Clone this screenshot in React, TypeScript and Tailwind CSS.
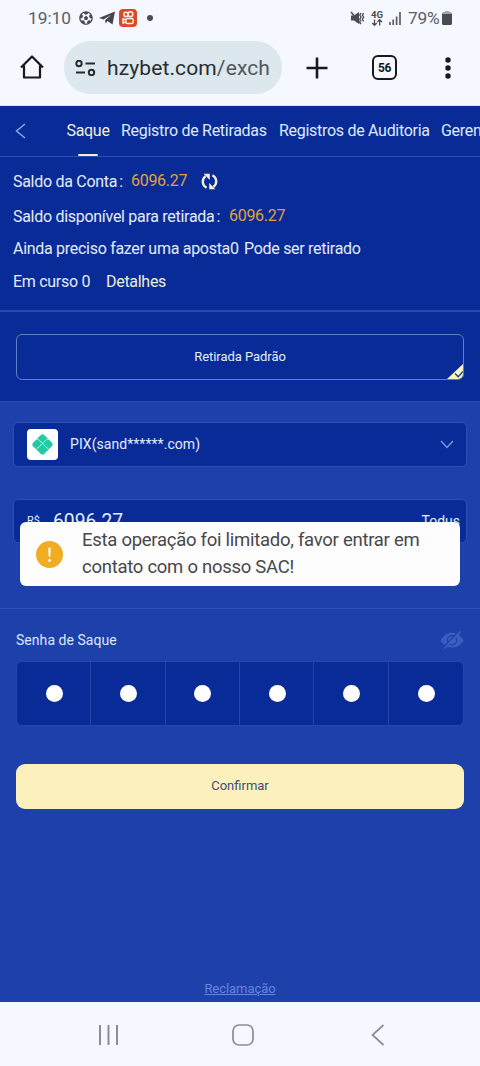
import React from "react";
import { FaFutbol } from "react-icons/fa";

function StatusBar() {
  return (
    <div className="flex h-9 shrink-0 items-center pr-[28px] pl-7 text-[#5b5e68]">
      <span className="w-[51px] text-[17.3px] leading-9 whitespace-nowrap">19:10</span>
      <FaFutbol className="h-[14px] w-[14px] text-[#4a4c52]" />
      <svg className="ml-[6px] h-[14px] w-[17px]" viewBox="0 0 17 14">
        <path d="M0 7 16 .5 13.500 13.500 8.500 10 6.800 12.500 6 9.200 12 4 4.500 8.400z" fill="#45474c" />
      </svg>
      <svg className="ml-[3px] h-[18px] w-[18px]" viewBox="0 0 18 18" fill="none" stroke="#fff0e8" strokeWidth="1.5">
        <rect width="18" height="18" rx="4" fill="#dd4926" stroke="none" />
        <circle cx="7" cy="5.4" r="2.1" />
        <circle cx="11.4" cy="5.2" r="2.4" />
        <rect x="6.8" y="9.4" width="7.4" height="5.2" rx="1.7" />
        <path d="M6.8 11 4 9.8v4.4l2.8-1.4" strokeLinejoin="round" />
      </svg>
      <span className="ml-[10px] h-[6px] w-[6px] rounded-full bg-[#4b4d55]" />
      <span className="flex-1" />
      <svg className="h-[14px] w-[15px]" viewBox="0 0 15 14" fill="none" stroke="#4b4d53" strokeWidth="1.4">
        <path d="M1 4.500h3L9 1v12L4 9.500H1z" fill="#4b4d53" stroke="none" />
        <path d="M1 1l10 12" strokeWidth="1.500" />
        <path d="M11 2l-1.200 2L11 6l-1.200 2.200L11 10.500M13.600 2l-1.200 2 1.200 2-1.200 2.200 1.200 2.300" />
      </svg>
      <svg className="ml-[6px] h-[17px] w-[12px]" viewBox="0 0 12 17" fill="none" stroke="#4b4d53" strokeWidth="1.300">
        <text x="0" y="7.500" fontSize="8.500" fontWeight="700" fill="#4b4d53" stroke="none" textLength="12" lengthAdjust="spacingAndGlyphs">4G</text>
        <path d="M3.500 9.500v5.500M1.200 13l2.300 2.300L5.800 13M8.700 15.500V10M6.400 12l2.300-2.300L11 12" />
      </svg>
      <svg className="ml-[6px] h-[13px] w-[12px]" viewBox="0 0 12 13" stroke="#5b5e68" strokeWidth="1.700">
        <path d="M1 10v3M4.200 7.500V13M7.600 4.500V13" />
        <path d="M11 0v13" />
      </svg>
      <span className="ml-[7px] w-[33px] text-[17.300px] leading-9 tracking-[-0.200px] whitespace-nowrap">79%</span>
      <svg className="ml-[1px] h-[14px] w-[10px]" viewBox="0 0 10 14">
        <path d="M3 0h4v1.500h1.500A1.500 1.500 0 0 1 10 3v9.500A1.500 1.500 0 0 1 8.500 14h-7A1.500 1.500 0 0 1 0 12.500V3a1.500 1.500 0 0 1 1.500-1.500H3z" fill="#494b50" />
        <path d="M3 0h4v1.500h1.500A1.500 1.500 0 0 1 10 3H0a1.500 1.500 0 0 1 1.500-1.500H3z" fill="#a3a6ad" />
      </svg>
    </div>
  );
}

function BrowserBar() {
  return (
    <div className="flex h-[70px] shrink-0 items-start border-b border-[#d9e2f8] pt-[5px] text-[#17191f]">
      <svg className="mt-[13px] ml-5 h-[26px] w-6 shrink-0" viewBox="0 0 24 26" fill="none" stroke="currentColor" strokeWidth="2.200" strokeLinejoin="round">
        <path d="M1 13.500 12 2.500 23 13.500M4 11.500v12h16v-12" />
      </svg>
      <div className="ml-5 flex h-[53px] w-[218px] shrink-0 items-center rounded-full bg-[#dce8ed] pl-[11px]">
        <svg className="h-4 w-[21px] shrink-0" viewBox="0 0 21 16" fill="none" stroke="#262b30" strokeWidth="2">
          <circle cx="4" cy="3.500" r="2.700" />
          <path d="M10.500 3.500H20M1 12.500h9" />
          <circle cx="16.500" cy="12.500" r="2.700" />
        </svg>
        <span className="ml-[11px] pt-[2px] text-[21px] leading-[53px] tracking-[0.120px] whitespace-nowrap text-[#272c31]">
          hzybet.com<span className="text-[#50575c]">/exch</span>
        </span>
      </div>
      <svg className="mt-4 ml-6 h-[22px] w-[22px] shrink-0" viewBox="0 0 22 22" stroke="currentColor" strokeWidth="2.600">
        <path d="M11 0.500v21M0.500 11h21" />
      </svg>
      <div className="mt-[14px] ml-[44px] flex h-[25px] w-[25px] shrink-0 items-center justify-center rounded-[6px] border-2 border-[#17191f] text-[12px] font-bold tracking-[-0.300px]">56</div>
      <svg className="mt-4 ml-[47px] h-[22px] w-[8px] shrink-0" viewBox="0 0 8 22" fill="currentColor">
        <circle cx="4" cy="3" r="2.700" />
        <circle cx="4" cy="11" r="2.700" />
        <circle cx="4" cy="19" r="2.700" />
      </svg>
    </div>
  );
}

function Tabs() {
  return (
    <nav className="flex h-[51px] shrink-0 overflow-hidden border-b border-[#2d4eae] text-[16px] leading-[50px] tracking-[-0.290px] whitespace-nowrap text-[#dfe9fa]">
      <svg className="mt-[17px] ml-[15px] h-4 w-[11px] shrink-0" viewBox="0 0 11 16" fill="none" stroke="#83a8ef" strokeWidth="1.500">
        <path d="M10 1 1.500 8l8.500 7" />
      </svg>
      <div className="ml-[40px] flex w-[44px] shrink-0 flex-col items-center text-[#f1efd8]">
        <span className="h-12">Saque</span>
        <span className="h-[2px] w-5 shrink-0 rounded-full bg-[#f0ecd0]" />
      </div>
      <span className="ml-[11px] w-[146px] shrink-0">Registro de Retiradas</span>
      <span className="ml-[12px] w-[151px] shrink-0">Registros de Auditoria</span>
      <span className="ml-[11px] shrink-0">Geren</span>
    </nav>
  );
}

function Balance() {
  return (
    <section className="h-[155px] shrink-0 border-b-2 border-[#2848aa] pt-[7px] pl-[13px] text-[16px] tracking-[-0.290px] whitespace-nowrap text-[#e3ecfb]">
      <div className="flex h-[35px] items-center">
        <span className="w-[118px]">Saldo da Conta<span className="ml-[2px]">:</span></span>
        <span className="w-[56px] pb-[2px] text-[#e3a03c]">6096.27</span>
        <svg className="ml-[14px] h-[17px] w-[17px]" viewBox="0 0 17 17" fill="none" stroke="#f5f0d8" strokeWidth="2.300">
          <path d="M5.600 14.700C1.200 12.500.2 6.500 4.600 3.200M11.400 2.300c4.400 2.200 5.400 8.200 1 11.500" />
          <path d="M2.600.8h6.200v6.200zM14.400 16.200H8.200V10z" fill="#f5f0d8" stroke="none" />
        </svg>
      </div>
      <div className="flex h-[35px] items-center">
        <span className="w-[216px]">Saldo disponível para retirada<span className="ml-[2px]">:</span></span>
        <span className="pb-[2px] text-[#e3a03c]">6096.27</span>
      </div>
      <div className="flex h-[29px] items-center">
        <span className="w-[231px]">Ainda preciso fazer uma aposta0</span>
        <span>Pode ser retirado</span>
      </div>
      <div className="flex h-[38px] items-center">
        <span className="w-[93px]">Em curso 0</span>
        <span className="text-[#efedd8]">Detalhes</span>
      </div>
    </section>
  );
}

function PixLogo() {
  return (
    <svg className="h-[21px] w-[21px]" viewBox="0 0 21 21">
      <path d="M8.600 1.300a2.700 2.700 0 0 1 3.800 0l7.300 7.300a2.700 2.700 0 0 1 0 3.800l-7.300 7.300a2.700 2.700 0 0 1-3.800 0l-7.300-7.300a2.700 2.700 0 0 1 0-3.800z" fill="#25c9a4" />
      <path d="M4.500 5.200c1.500 0 2 .3 3 1.300l6.500 6.500c1 1 1.500 1.300 2.500 1.300M16.500 5.200c-1.500 0-2 .3-3 1.300L7 13c-1 1-1.500 1.300-2.500 1.300" fill="none" stroke="#d5f7ee" strokeWidth="0.900" />
    </svg>
  );
}

function PasswordCells() {
  return (
    <div className="mx-4 mt-[11px] grid h-[65px] shrink-0 grid-cols-6 overflow-hidden rounded-[6px] border border-[#2546aa] bg-[#092b97]">
      {[0, 1, 2, 3, 4, 5].map((n) => (
        <div key={n} className="flex items-center justify-center border-r border-[#2444a8] pl-px last:border-r-0">
          <span className="h-[17px] w-[17px] rounded-full bg-white" />
        </div>
      ))}
    </div>
  );
}

function Toast() {
  return (
    <div className="absolute top-[522px] left-5 flex h-16 w-[440px] items-center rounded-[6px] bg-[#fdfdfe] pl-4">
      <svg className="h-[27px] w-[27px]" viewBox="0 0 27 27">
        <circle cx="13.500" cy="13.500" r="13.500" fill="#f0ad22" />
        <path d="M12.300 6.800h2.400l-.4 9h-1.600z" fill="#fff" />
        <circle cx="13.500" cy="19.400" r="1.300" fill="#fff" />
      </svg>
      <p className="ml-[19px] text-[18.500px] leading-[27px] tracking-[-0.270px] whitespace-nowrap text-[#47484b]">
        Esta operação foi limitado, favor entrar em
        <br />
        contato com o nosso SAC!
      </p>
    </div>
  );
}

export default function App() {
  return (
    <main className="relative flex h-[1066px] w-[480px] flex-col overflow-hidden bg-[#f5f8fe] font-[Roboto,sans-serif]">
      <StatusBar />
      <BrowserBar />
      <div className="flex h-[896px] shrink-0 flex-col bg-[#1e40aa]">
        <div className="bg-[#092b97]">
          <Tabs />
          <Balance />
          <section className="h-[90px] border-b border-[#2949ad] px-4 pt-[22px]">
            <div className="relative flex h-[46px] items-center justify-center overflow-hidden rounded-[6px] border border-[#5d7fc4] pb-[1px] text-[13px] tracking-[-0.050px] text-[#e3ecfb]">
              Retirada Padrão
              <svg className="absolute right-[-1px] bottom-[-1px] h-[17px] w-[18px]" viewBox="0 0 18 17" fill="none">
                <path d="M18 0v17H0z" fill="#f8f2c6" />
                <path d="m9 10.500 3.200 3.200L17 8.500" stroke="#243d78" strokeWidth="1.300" />
              </svg>
            </div>
          </section>
        </div>

        <div className="mx-[13px] mt-[20px] flex h-[45px] shrink-0 items-center rounded-[5px] border border-[#2e50b2] bg-[#092b97] pr-3 pl-[13px]">
          <div className="flex h-[31px] w-[31px] items-center justify-center rounded-[4px] bg-white">
            <PixLogo />
          </div>
          <span className="ml-[12px] flex-1 text-[14px] tracking-[0.050px] text-[#e3ecfb]">PIX(sand******.com)</span>
          <svg className="h-[9px] w-[14px]" viewBox="0 0 14 9" fill="none" stroke="#7898e8" strokeWidth="1.400">
            <path d="m1 1 6 6.500L13 1" />
          </svg>
        </div>

        <div className="mx-[13px] mt-[32px] flex h-[44px] shrink-0 items-center rounded-[5px] border border-[#2e50b2] bg-[#092b97] pr-[6px] pl-[13px] text-[#e3ecfb]">
          <span className="w-[26px] text-[11px]">R$</span>
          <span className="flex-1 pt-[2px] text-[19.300px]">6096.27</span>
          <span className="text-[14px]">Todus</span>
        </div>

        <div className="mt-[65px] h-px shrink-0 bg-[#3152b5]" />
        <div className="mt-[21px] flex h-5 shrink-0 items-center px-4 text-[14px] tracking-[0.050px] text-[#dce7fb]">
          <span className="flex-1">Senha de Saque</span>
          <svg className="h-[18px] w-6" viewBox="0 0 24 18" fill="none" stroke="#3b5fc1">
            <path d="M.5 9.500C4 4 8 1.800 12 1.800S20 4 23.500 9.500C20 14.500 16 16.500 12 16.500S4 14.500.5 9.500z" fill="#3b5fc1" stroke="none" />
            <circle cx="12" cy="9.200" r="4.700" stroke="#1e40aa" strokeWidth="1.300" />
            <path d="M18.500.5 3 16.500" stroke="#1e40aa" strokeWidth="1.200" />
            <path d="M20.500.5 4.500 17.500" strokeWidth="1.700" />
          </svg>
        </div>
        <PasswordCells />
        <button className="mx-4 mt-[38px] h-[45px] shrink-0 rounded-[9px] bg-[#fcf1bd] pb-[1px] text-[13px] text-[#3d4c78]">Confirmar</button>
        <div className="flex-1" />
        <a className="mb-[4px] text-center text-[13px] leading-[18px] tracking-[-0.050px] text-[#6586df] underline">Reclamação</a>
      </div>
      <div className="flex h-16 shrink-0 items-center pt-[1px] pl-[99px] text-[#8b8d93]">
        <svg className="h-5 w-5" viewBox="0 0 20 20" stroke="currentColor" strokeWidth="2">
          <path d="M1 0v20M9.500 0v20M18 0v20" />
        </svg>
        <svg className="ml-[113px] h-[22px] w-[22px] shrink-0" viewBox="0 0 22 22" fill="none" stroke="currentColor" strokeWidth="1.700">
          <rect x="1" y="1" width="20" height="20" rx="6" />
        </svg>
        <svg className="ml-[117px] h-[22px] w-[14px] shrink-0" viewBox="0 0 14 22" fill="none" stroke="currentColor" strokeWidth="1.700">
          <path d="M12.500 1 1.500 11l11 10" />
        </svg>
      </div>
      <Toast />
    </main>
  );
}
